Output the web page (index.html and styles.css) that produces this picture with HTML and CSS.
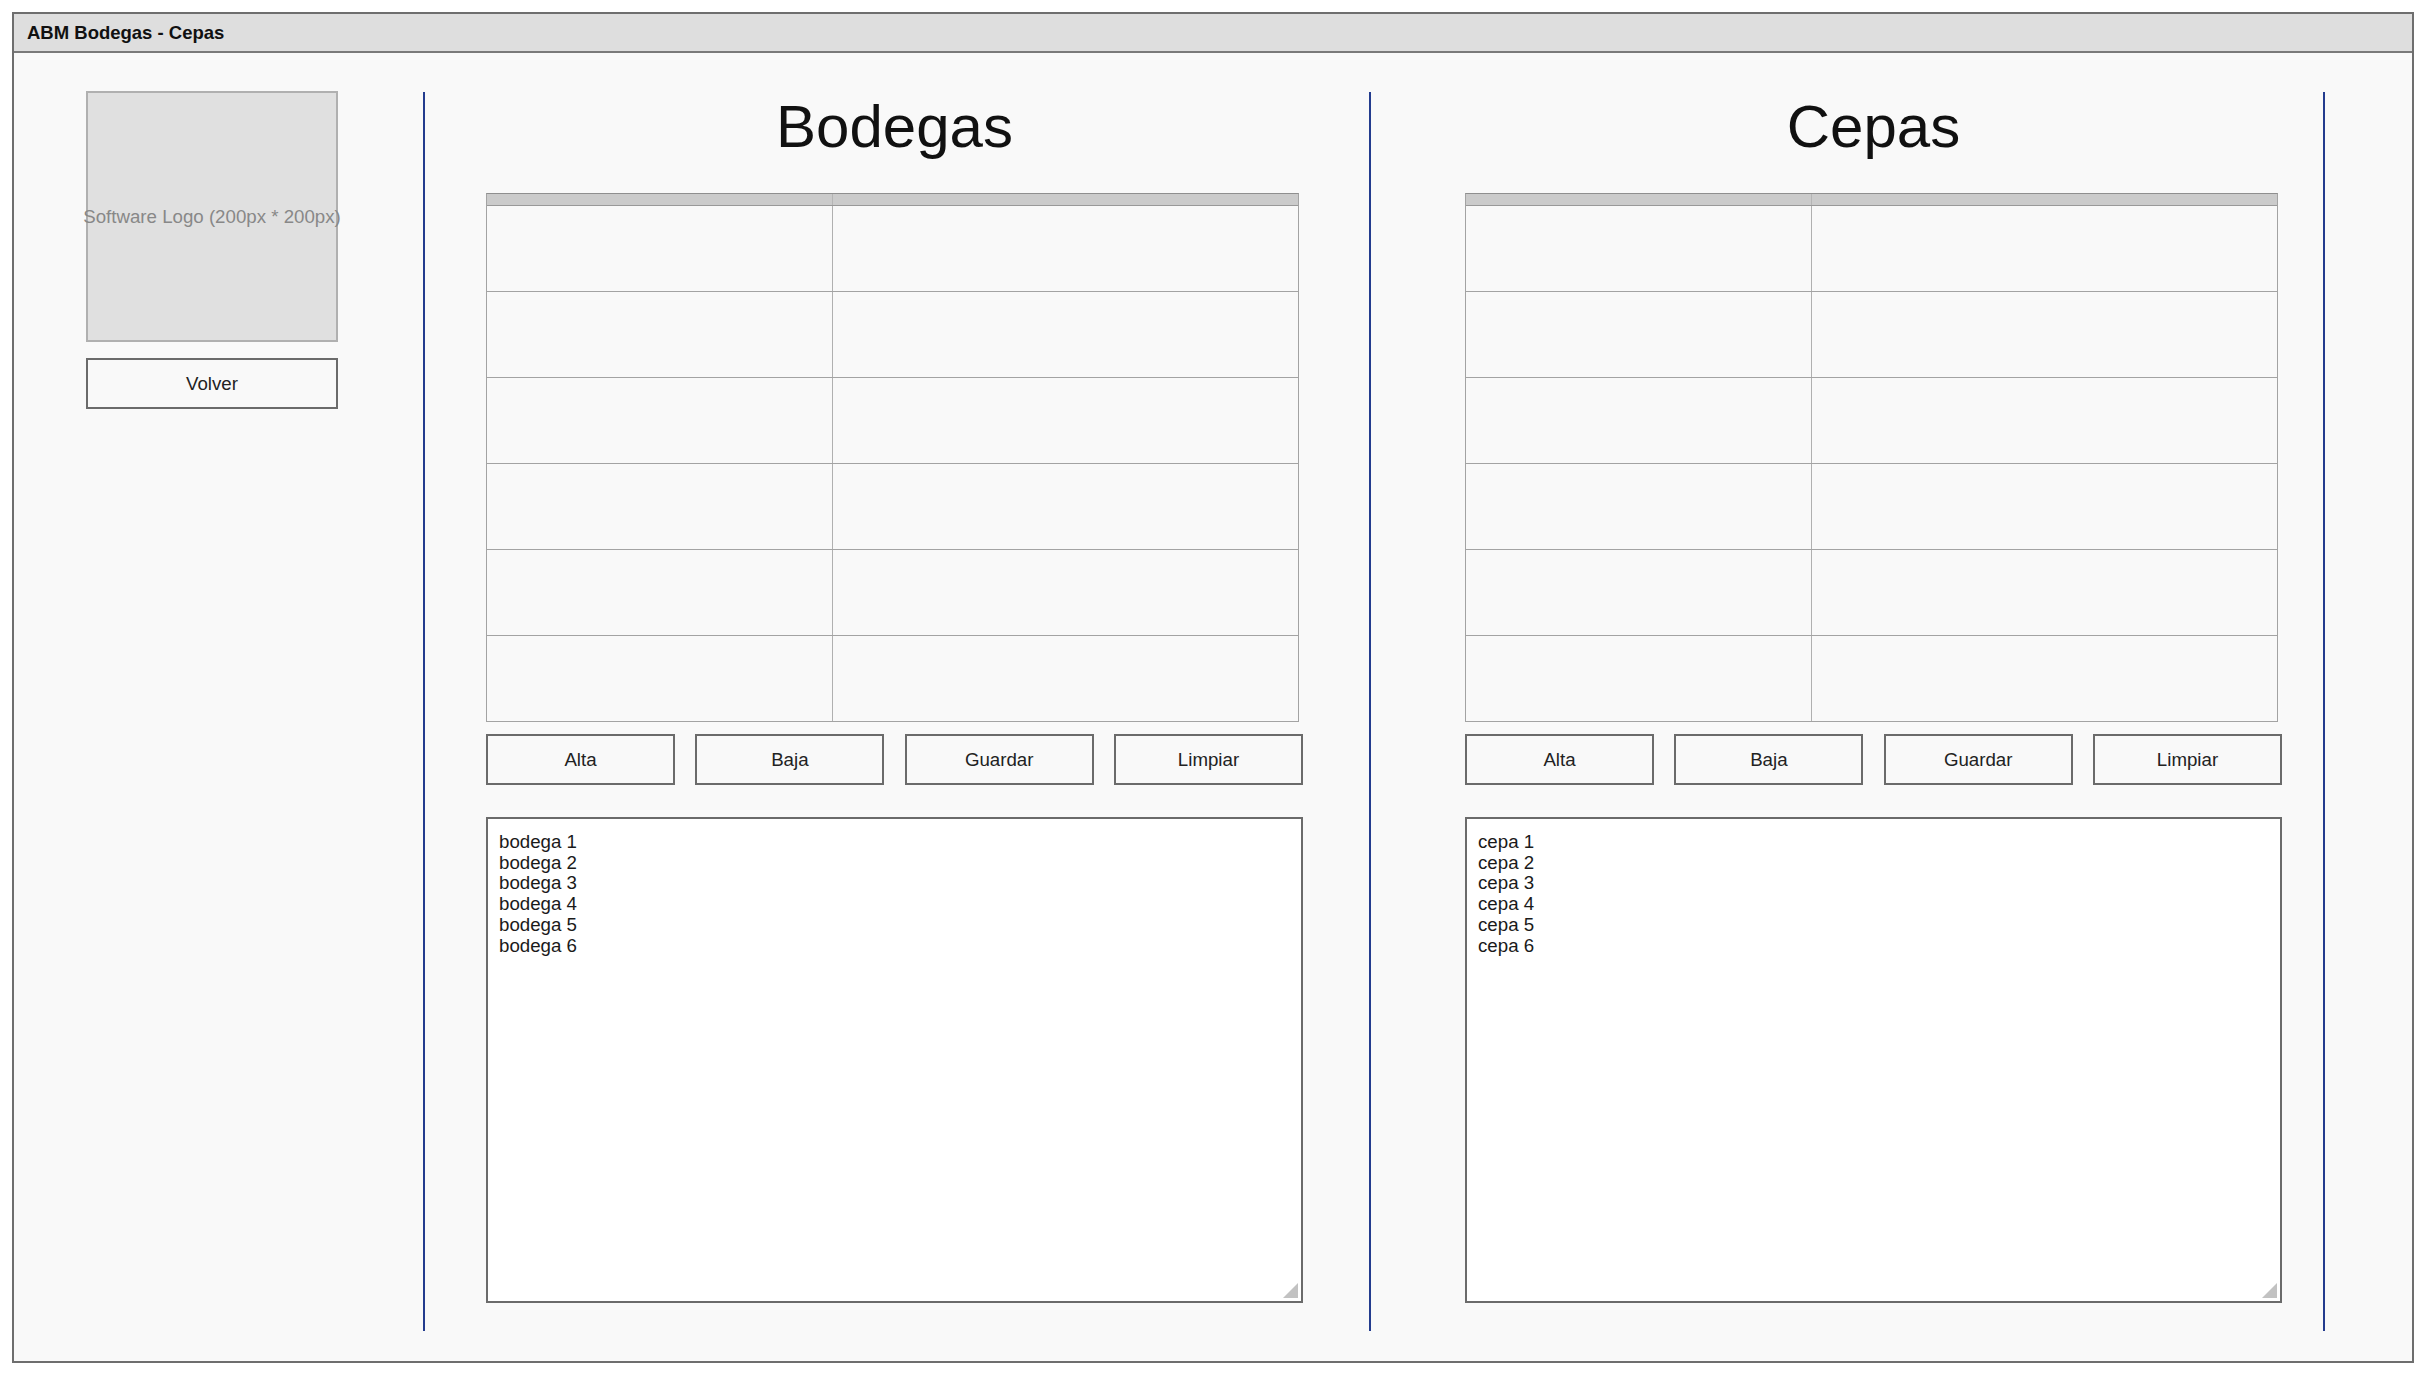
FILE: index.html
```html
<!DOCTYPE html>
<html lang="es">
<head>
<meta charset="utf-8">
<title>ABM Bodegas - Cepas</title>
<link rel="stylesheet" href="styles.css">
</head>
<body>
<div class="window">
  <div class="titlebar">ABM Bodegas - Cepas</div>
  <div class="content">
    <aside class="sidebar">
      <div class="logo">Software Logo (200px * 200px)</div>
      <button class="btn btn-volver">Volver</button>
    </aside>
    <div class="divider divider-1"></div>
    <section class="panel panel-1">
      <h1 class="panel-title">Bodegas</h1>
      <div class="grid">
        <div class="grid-head"><div class="cell"></div><div class="cell"></div></div>
        <div class="grid-row"><div class="cell"></div><div class="cell"></div></div>
        <div class="grid-row"><div class="cell"></div><div class="cell"></div></div>
        <div class="grid-row"><div class="cell"></div><div class="cell"></div></div>
        <div class="grid-row"><div class="cell"></div><div class="cell"></div></div>
        <div class="grid-row"><div class="cell"></div><div class="cell"></div></div>
        <div class="grid-row"><div class="cell"></div><div class="cell"></div></div>
      </div>
      <div class="actions">
        <button class="btn">Alta</button>
        <button class="btn">Baja</button>
        <button class="btn">Guardar</button>
        <button class="btn">Limpiar</button>
      </div>
      <div class="textbox">bodega 1
bodega 2
bodega 3
bodega 4
bodega 5
bodega 6<span class="grip"></span></div>
    </section>
    <div class="divider divider-2"></div>
    <section class="panel panel-2">
      <h1 class="panel-title">Cepas</h1>
      <div class="grid">
        <div class="grid-head"><div class="cell"></div><div class="cell"></div></div>
        <div class="grid-row"><div class="cell"></div><div class="cell"></div></div>
        <div class="grid-row"><div class="cell"></div><div class="cell"></div></div>
        <div class="grid-row"><div class="cell"></div><div class="cell"></div></div>
        <div class="grid-row"><div class="cell"></div><div class="cell"></div></div>
        <div class="grid-row"><div class="cell"></div><div class="cell"></div></div>
        <div class="grid-row"><div class="cell"></div><div class="cell"></div></div>
      </div>
      <div class="actions">
        <button class="btn">Alta</button>
        <button class="btn">Baja</button>
        <button class="btn">Guardar</button>
        <button class="btn">Limpiar</button>
      </div>
      <div class="textbox">cepa 1
cepa 2
cepa 3
cepa 4
cepa 5
cepa 6<span class="grip"></span></div>
    </section>
    <div class="divider divider-3"></div>
  </div>
</div>
</body>
</html>
```

FILE: styles.css
```css
* { box-sizing: border-box; }

html, body {
  margin: 0;
  padding: 0;
  background: #ffffff;
  font-family: "Liberation Sans", Arial, sans-serif;
  color: #1a1a1a;
}

.window {
  margin: 12px;
  width: 2402px;
  height: 1351px;
  border: 2px solid #6e6e6e;
  background: #f9f9f9;
  display: flex;
  flex-direction: column;
}

.titlebar {
  height: 39px;
  line-height: 37px;
  background: #dedede;
  border-bottom: 2px solid #7a7a7a;
  padding-left: 13px;
  font-size: 18.5px;
  font-weight: bold;
  color: #111;
}

.content {
  display: flex;
  align-items: flex-start;
  padding-top: 38px;
  padding-left: 72px;
}

.sidebar {
  width: 252px;
  display: flex;
  flex-direction: column;
}

.logo {
  width: 252px;
  height: 251px;
  background: #e0e0e0;
  border: 2px solid #b0b0b0;
  display: flex;
  align-items: center;
  justify-content: center;
  white-space: nowrap;
  font-size: 18.7px;
  color: #888888;
}

.btn {
  height: 51px;
  border: 2px solid #6b6b6b;
  background: #f9f9f9;
  font-family: "Liberation Sans", Arial, sans-serif;
  font-size: 18.7px;
  color: #222;
  padding: 0;
  border-radius: 0;
}

.btn-volver {
  margin-top: 16px;
  width: 252px;
}

.divider {
  width: 2px;
  height: 1239px;
  margin-top: 1px;
  background: #233c8e;
}

.divider-1 { margin-left: 85px; }
.divider-2 { margin-left: 66px; }
.divider-3 { margin-left: 41px; }

.panel {
  width: 817px;
  margin-top: 1px;
  display: flex;
  flex-direction: column;
}

.panel-1 { margin-left: 61px; }
.panel-2 { margin-left: 94px; }

.panel-title {
  margin: 0;
  font-size: 60px;
  font-weight: normal;
  line-height: 69px;
  text-align: center;
  color: #111;
}

.grid {
  margin-top: 32px;
  width: 813px;
  border: 1px solid #a3a3a3;
  border-top-color: #8f8f8f;
  background: #f9f9f9;
}

.grid-head {
  display: grid;
  grid-template-columns: 346px 1fr;
  height: 12px;
  background: #cbcbcb;
  border-bottom: 1px solid #999;
}

.grid-head .cell:first-child { border-right: 1px solid #b5b5b5; }

.grid-row {
  display: grid;
  grid-template-columns: 346px 1fr;
  height: 86px;
  border-bottom: 1px solid #a3a3a3;
}

.grid-row:last-child {
  height: 85px;
  border-bottom: none;
}

.grid-row .cell:first-child { border-right: 1px solid #b0b0b0; }

.actions {
  margin-top: 12px;
  display: flex;
  justify-content: space-between;
}

.actions .btn { width: 189px; }

.textbox {
  position: relative;
  margin-top: 32px;
  height: 486px;
  border: 2px solid #6b6b6b;
  background: #ffffff;
  padding: 13px 11px;
  font-size: 18.7px;
  line-height: 20.7px;
  white-space: pre-line;
  color: #1a1a1a;
}

.grip {
  position: absolute;
  right: 3px;
  bottom: 3px;
  width: 0;
  height: 0;
  border-style: solid;
  border-width: 0 0 15px 15px;
  border-color: transparent transparent #c2c2c2 transparent;
}
```
